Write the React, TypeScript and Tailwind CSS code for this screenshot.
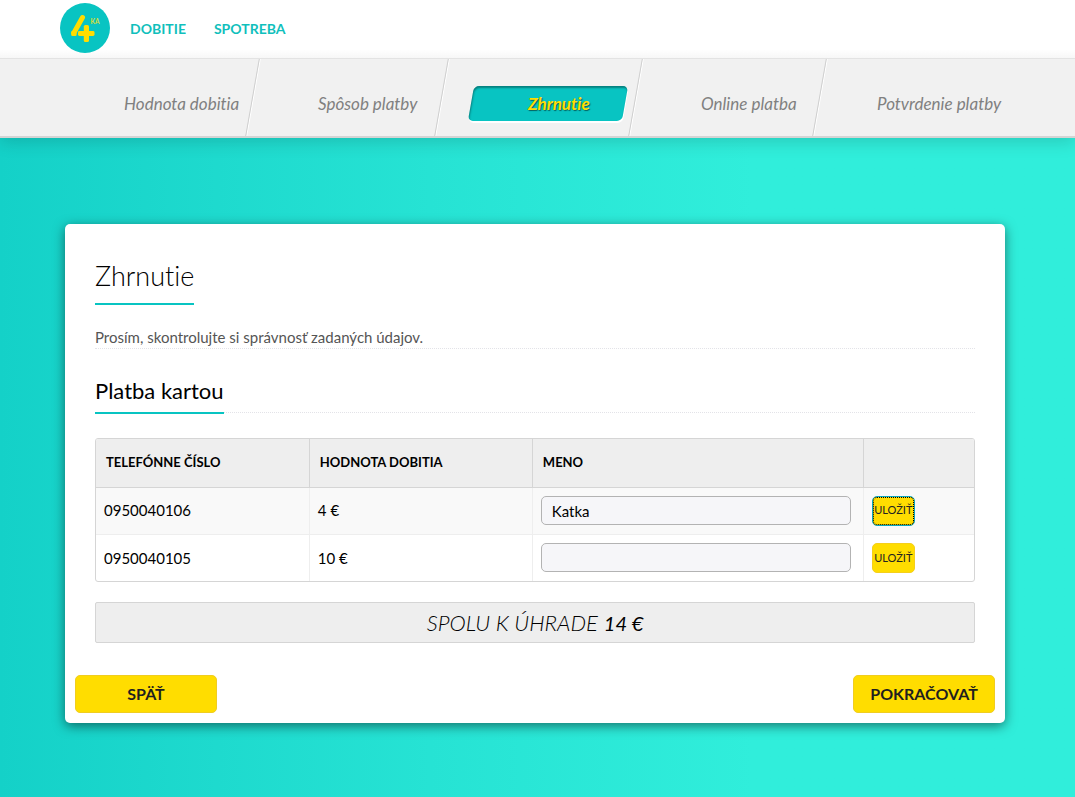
import { useState } from 'react';
import clsx from 'clsx';

const links = ['Dobitie', 'Spotreba'];

const steps = ['Hodnota dobitia', 'Spôsob platby', 'Zhrnutie', 'Online platba', 'Potvrdenie platby'];
const activeStep = 'Zhrnutie';

const rows = [
  { phone: '0950040106', amount: 4, name: 'Katka' },
  { phone: '0950040105', amount: 10, name: '' },
];

function Logo() {
  return (
    <svg viewBox="0 0 50 50" className="size-[50px]" role="img" aria-label="4ka">
      <circle cx="25" cy="25" r="25" fill="#08c4c2" />
      <path d="M22.5 14.5 L13.8 30" fill="none" stroke="#ffdd00" strokeWidth="5" strokeLinecap="round" />
      <rect x="11.2" y="28" width="5.4" height="5" rx="1.2" fill="#ffdd00" />
      <rect x="18" y="28" width="16.5" height="5" rx="1.4" fill="#ffdd00" />
      <rect x="23.8" y="22" width="5.2" height="17" rx="1.6" fill="#ffdd00" />
      <text x="30.5" y="21" fontSize="6.5" fontWeight="700" fill="#d9dc3a">KA</text>
    </svg>
  );
}

function Step({ label, last }: { label: string; last: boolean }) {
  const active = label === activeStep;
  return (
    <li className="flex h-full items-center">
      {active ? (
        <a
          href="#"
          aria-current="step"
          className="mt-3 ml-7 flex h-[35px] w-[154px] -skew-x-10 items-center rounded-[5px] bg-[#08c4c2] pl-[57px] shadow-[inset_1px_2px_2px_rgba(0,0,0,0.35),1px_2px_0_#fff]"
        >
          <span className="skew-x-10 font-bold text-[#ffdd00] italic [text-shadow:1px_1px_1px_rgba(0,0,0,0.5)]">{label}</span>
        </a>
      ) : (
        <a href="#" className={clsx('mt-3 whitespace-nowrap text-[#808080] italic', last ? 'pl-14' : 'pl-16')}>
          {label}
        </a>
      )}
      {!last && <span className="ml-auto h-full w-[2px] -skew-x-10 border-r border-l border-r-white border-l-[#cfcfcf]" />}
    </li>
  );
}

export default function App() {
  const [names, setNames] = useState(rows.map(r => r.name));

  return (
    <div className="flex min-h-screen flex-col bg-white font-['Lato',sans-serif] text-black [font-variant-ligatures:none]">
      {/* Top bar */}
      <header className="flex h-[58px] items-center gap-5 bg-linear-to-b from-white from-85% to-[#f7f7f7] pb-[2px] pl-[60px]">
        <a href="#"><Logo /></a>
        <nav className="flex gap-7 text-[14px] font-bold text-[#10bfbc] uppercase">
          {links.map(link => <a key={link} href="#">{link}</a>)}
        </nav>
      </header>

      {/* Steps */}
      <nav className="relative border-t border-b-2 border-t-[#e3e3e3] border-b-[#d4d4d4] bg-[#f1f1f1] px-[60px] shadow-[0_4px_16px_rgba(0,0,0,0.15)] [clip-path:inset(0_0_-30px_0)]">
        <ol className="grid h-[77px] grid-cols-[194fr_189fr_194fr_184fr_194fr] text-[17px]">
          {steps.map((label, i) => <Step key={label} label={label} last={i === steps.length - 1} />)}
        </ol>
      </nav>

      <main className="grow bg-linear-to-r from-[#14d1c8] via-[#26e3d4] via-40% to-[#30eedb] to-70% pt-[86px] pr-[70px] pb-[74px] pl-[65px]">
        <div className="rounded-[5px] bg-white p-[10px] shadow-[0_3px_12px_rgba(0,0,0,0.5)]">
          <div className="px-5 pt-6">
            <h1 className="inline-block border-b-2 border-[#08c4c2] pb-[9px] align-top text-[27px] leading-[36px] font-light">
              Zhrnutie
            </h1>
            <p className="mt-[22px] border-b border-dotted border-[#e3e3e8] text-[15px] leading-[21px] text-[#555]">
              Prosím, skontrolujte si správnosť zadaných údajov.
            </p>

            <div className="mt-[27px] flex border-b border-dotted border-[#e3e3e8]">
              <h2 className="-mb-[2px] border-b-2 border-[#08c4c2] pb-[6px] text-[22px] leading-[30px]">Platba kartou</h2>
            </div>

            <div className="mt-[25px] overflow-hidden rounded-[3px] border border-[#d5d5d5]">
              <table className="w-full table-fixed border-collapse text-left text-[15px]">
                <colgroup>
                  <col className="w-[24.3%]" />
                  <col className="w-[25.4%]" />
                  <col className="w-[37.7%]" />
                  <col />
                </colgroup>
                <thead>
                  <tr className="h-12 border-b border-[#d5d5d5] bg-[#eee] text-[13px] uppercase">
                    <th className="border-r border-[#d5d5d5] px-[10px] font-bold">Telefónne číslo</th>
                    <th className="border-r border-[#d5d5d5] px-[10px] font-bold">Hodnota dobitia</th>
                    <th className="border-r border-[#d5d5d5] px-[10px] font-bold">Meno</th>
                    <td />
                  </tr>
                </thead>
                <tbody>
                  {rows.map((row, i) => (
                    <tr key={row.phone} className="h-[47px] border-[#eee] odd:border-b odd:bg-[#f9f9f9]">
                      <td className="border-r border-[#eee] px-2">{row.phone}</td>
                      <td className="border-r border-[#eee] px-2">{row.amount} €</td>
                      <td className="border-r border-[#eee] pr-3 pl-2">
                        <input
                          type="text"
                          aria-label={`Meno pre ${row.phone}`}
                          value={names[i]}
                          onChange={e => setNames(names.map((n, j) => (j === i ? e.target.value : n)))}
                          className="block h-[29px] w-full rounded-[5px] border border-[#b3b3b3] bg-[#f6f6f9] px-[10px]"
                        />
                      </td>
                      <td className="px-2">
                        <button
                          type="button"
                          className={clsx(
                            'block h-[30px] w-[43px] rounded-[5px] border bg-[#ffdd00] text-center text-[11px] text-[#222] uppercase',
                            i === 0 ? 'border-[#0aa5c0] outline-1 -outline-offset-2 outline-black outline-dotted' : 'border-[#f5cf1b]'
                          )}
                        >
                          Uložiť
                        </button>
                      </td>
                    </tr>
                  ))}
                </tbody>
              </table>
            </div>

            <p className="mt-5 flex h-[41px] items-center justify-center gap-[6px] rounded-[2px] border border-[#d5d5d5] bg-[#eee] italic">
              <span className="text-[22px] leading-[30px] font-light uppercase">Spolu k úhrade</span>
              <strong className="text-[20px] leading-[30px] font-normal">14 €</strong>
            </p>
          </div>

          <div className="mt-8 flex justify-between text-[16px] font-bold text-[#1f1f1f]">
            <button type="button" className="h-[38px] w-[142px] rounded-[5px] border border-[#f0cd20] bg-[#ffdd00] uppercase">Späť</button>
            <button type="button" className="h-[38px] w-[142px] rounded-[5px] border border-[#f0cd20] bg-[#ffdd00] uppercase">Pokračovať</button>
          </div>
        </div>
      </main>
    </div>
  );
}
